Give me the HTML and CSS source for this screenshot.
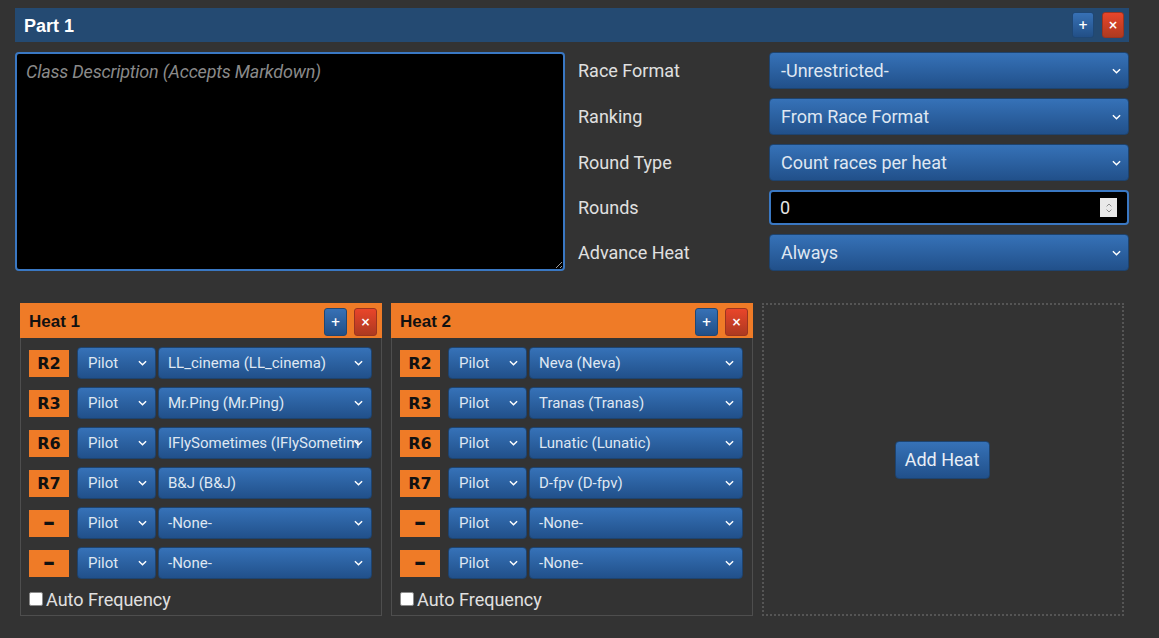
FILE: index.html
```html
<!DOCTYPE html>
<html>
<head>
<meta charset="utf-8">
<link rel="stylesheet" href="styles.css">
</head>
<body>
<div class="page">
  <section class="panel">
    <header class="panel-head">
      <h2 class="panel-title">Part 1</h2>
      <div class="actions">
        <span class="btn-sm btn-add">+</span>
        <span class="btn-sm btn-del">×</span>
      </div>
    </header>
    <div class="panel-body">
      <textarea class="desc" placeholder="Class Description (Accepts Markdown)"></textarea>
      <div class="form">
        <div class="field"><span class="label">Race Format</span><div class="select big">-Unrestricted-<svg class="chev" viewBox="0 0 10 6"><path d="M1 1l4 4 4-4"/></svg></div></div>
        <div class="field"><span class="label">Ranking</span><div class="select big">From Race Format<svg class="chev" viewBox="0 0 10 6"><path d="M1 1l4 4 4-4"/></svg></div></div>
        <div class="field"><span class="label">Round Type</span><div class="select big">Count races per heat<svg class="chev" viewBox="0 0 10 6"><path d="M1 1l4 4 4-4"/></svg></div></div>
        <div class="field field-num"><span class="label">Rounds</span><div class="numinput">0<span class="spin"><svg viewBox="0 0 10 16"><path d="M2 6l3-3 3 3M2 10l3 3 3-3"/></svg></span></div></div>
        <div class="field"><span class="label">Advance Heat</span><div class="select big">Always<svg class="chev" viewBox="0 0 10 6"><path d="M1 1l4 4 4-4"/></svg></div></div>
      </div>
    </div>

    <div class="heats">
      <div class="heat">
        <div class="heat-head">
          <h3 class="heat-title">Heat 1</h3>
          <div class="actions">
            <span class="btn-sm btn-add tall">+</span>
            <span class="btn-sm btn-del tall">×</span>
          </div>
        </div>
        <div class="slots">
          <div class="slot"><span class="badge">R2</span><div class="select sm pilot">Pilot<svg class="chev" viewBox="0 0 10 6"><path d="M1 1l4 4 4-4"/></svg></div><div class="select sm name">LL_cinema (LL_cinema)<svg class="chev" viewBox="0 0 10 6"><path d="M1 1l4 4 4-4"/></svg></div></div>
          <div class="slot"><span class="badge">R3</span><div class="select sm pilot">Pilot<svg class="chev" viewBox="0 0 10 6"><path d="M1 1l4 4 4-4"/></svg></div><div class="select sm name">Mr.Ping (Mr.Ping)<svg class="chev" viewBox="0 0 10 6"><path d="M1 1l4 4 4-4"/></svg></div></div>
          <div class="slot"><span class="badge">R6</span><div class="select sm pilot">Pilot<svg class="chev" viewBox="0 0 10 6"><path d="M1 1l4 4 4-4"/></svg></div><div class="select sm name"><span class="clip">IFlySometimes (IFlySometimes)</span><svg class="chev" viewBox="0 0 10 6"><path d="M1 1l4 4 4-4"/></svg></div></div>
          <div class="slot"><span class="badge">R7</span><div class="select sm pilot">Pilot<svg class="chev" viewBox="0 0 10 6"><path d="M1 1l4 4 4-4"/></svg></div><div class="select sm name">B&amp;J (B&amp;J)<svg class="chev" viewBox="0 0 10 6"><path d="M1 1l4 4 4-4"/></svg></div></div>
          <div class="slot"><span class="badge dash">–</span><div class="select sm pilot">Pilot<svg class="chev" viewBox="0 0 10 6"><path d="M1 1l4 4 4-4"/></svg></div><div class="select sm name">-None-<svg class="chev" viewBox="0 0 10 6"><path d="M1 1l4 4 4-4"/></svg></div></div>
          <div class="slot"><span class="badge dash">–</span><div class="select sm pilot">Pilot<svg class="chev" viewBox="0 0 10 6"><path d="M1 1l4 4 4-4"/></svg></div><div class="select sm name">-None-<svg class="chev" viewBox="0 0 10 6"><path d="M1 1l4 4 4-4"/></svg></div></div>
        </div>
        <label class="auto"><span class="check"></span>Auto Frequency</label>
      </div>

      <div class="heat">
        <div class="heat-head">
          <h3 class="heat-title">Heat 2</h3>
          <div class="actions">
            <span class="btn-sm btn-add tall">+</span>
            <span class="btn-sm btn-del tall">×</span>
          </div>
        </div>
        <div class="slots">
          <div class="slot"><span class="badge">R2</span><div class="select sm pilot">Pilot<svg class="chev" viewBox="0 0 10 6"><path d="M1 1l4 4 4-4"/></svg></div><div class="select sm name">Neva (Neva)<svg class="chev" viewBox="0 0 10 6"><path d="M1 1l4 4 4-4"/></svg></div></div>
          <div class="slot"><span class="badge">R3</span><div class="select sm pilot">Pilot<svg class="chev" viewBox="0 0 10 6"><path d="M1 1l4 4 4-4"/></svg></div><div class="select sm name">Tranas (Tranas)<svg class="chev" viewBox="0 0 10 6"><path d="M1 1l4 4 4-4"/></svg></div></div>
          <div class="slot"><span class="badge">R6</span><div class="select sm pilot">Pilot<svg class="chev" viewBox="0 0 10 6"><path d="M1 1l4 4 4-4"/></svg></div><div class="select sm name">Lunatic (Lunatic)<svg class="chev" viewBox="0 0 10 6"><path d="M1 1l4 4 4-4"/></svg></div></div>
          <div class="slot"><span class="badge">R7</span><div class="select sm pilot">Pilot<svg class="chev" viewBox="0 0 10 6"><path d="M1 1l4 4 4-4"/></svg></div><div class="select sm name">D-fpv (D-fpv)<svg class="chev" viewBox="0 0 10 6"><path d="M1 1l4 4 4-4"/></svg></div></div>
          <div class="slot"><span class="badge dash">–</span><div class="select sm pilot">Pilot<svg class="chev" viewBox="0 0 10 6"><path d="M1 1l4 4 4-4"/></svg></div><div class="select sm name">-None-<svg class="chev" viewBox="0 0 10 6"><path d="M1 1l4 4 4-4"/></svg></div></div>
          <div class="slot"><span class="badge dash">–</span><div class="select sm pilot">Pilot<svg class="chev" viewBox="0 0 10 6"><path d="M1 1l4 4 4-4"/></svg></div><div class="select sm name">-None-<svg class="chev" viewBox="0 0 10 6"><path d="M1 1l4 4 4-4"/></svg></div></div>
        </div>
        <label class="auto"><span class="check"></span>Auto Frequency</label>
      </div>

      <div class="add-heat">
        <span class="btn-big">Add Heat</span>
      </div>
    </div>
  </section>
</div>
</body>
</html>
```

FILE: styles.css
```css
* { box-sizing: border-box; }
html, body {
  margin: 0;
  background: #333333;
  height: 100%;
  overflow: hidden;
}
body {
  font-family: Roboto, "Noto Sans", sans-serif;
  font-size: 18px;
  color: #e4e4e4;
}
.page {
  padding: 8px 0 0 15px;
  width: 1129px;
}
.panel-head {
  height: 34px;
  background: #244a72;
  display: flex;
  align-items: center;
  justify-content: space-between;
  padding: 0 5px 0 9px;
}
.panel-title {
  margin: 0;
  padding-top: 2px;
  font-family: "Liberation Sans", Arial, sans-serif;
  font-weight: bold;
  font-size: 18px;
  color: #ffffff;
}
.actions {
  display: flex;
  gap: 8px;
}
.btn-sm {
  width: 22px;
  height: 26px;
  border-radius: 3px;
  display: flex;
  align-items: center;
  justify-content: center;
  color: #fff;
  font-family: "DejaVu Sans", sans-serif;
  font-weight: bold;
  font-size: 12px;
  line-height: 1;
}
.btn-sm.tall { width: 23px; height: 28px; }
.btn-add {
  background: linear-gradient(#3771b6, #224f86);
  border: 1px solid #1f4774;
}
.btn-del {
  background: linear-gradient(#e9452a, #ad3a20);
  border: 1px solid #9b3420;
}
.panel-body {
  display: flex;
  margin-top: 10px;
}
.desc {
  width: 550px;
  height: 219px;
  background: #000;
  border: 2px solid #3a78c3;
  border-radius: 4px;
  padding: 7px 9px;
  margin: 0;
  color: #ddd;
  font-family: inherit;
  font-size: 18px;
  letter-spacing: -0.2px;
  resize: both;
  outline: none;
}
.desc::placeholder {
  color: #8a8a8a;
  font-style: italic;
}
.form {
  flex: 1;
  margin-left: 13px;
  display: flex;
  flex-direction: column;
  gap: 9px;
}
.field {
  display: flex;
  align-items: center;
  height: 37px;
}
.field-num { height: 35px; }
.label {
  width: 191px;
  color: #e0e0e0;
}
.select {
  position: relative;
  display: flex;
  align-items: center;
  background: linear-gradient(#3672b8, #21508a);
  border: 1px solid #1e436e;
  border-radius: 4px;
  color: #dfe7f2;
  white-space: nowrap;
  overflow: hidden;
}
.select.big {
  flex: 1;
  height: 37px;
  padding-left: 11px;
}
.chev {
  position: absolute;
  right: 7px;
  top: 50%;
  width: 9px;
  height: 6px;
  margin-top: -3px;
  fill: none;
  stroke: #ffffff;
  stroke-width: 1.6;
}
.numinput {
  flex: 1;
  height: 35px;
  background: #000;
  border: 2px solid #3a78c3;
  border-radius: 4px;
  display: flex;
  align-items: center;
  justify-content: space-between;
  padding: 0 10px 0 9px;
  color: #e4e4e4;
}
.spin {
  width: 17px;
  height: 19px;
  background: #e9e9e9;
  display: flex;
  align-items: center;
  justify-content: center;
}
.spin svg {
  width: 8px;
  height: 14px;
  fill: none;
  stroke: #8a8a8a;
  stroke-width: 1.2;
}
.heats {
  display: flex;
  gap: 9px;
  margin-top: 32px;
  padding-left: 5px;
}
.heat {
  width: 362px;
  border: 1px solid #4e4e4e;
  border-top: 0;
  padding-bottom: 4px;
}
.heat-head {
  height: 35px;
  margin: 0 -1px;
  background: #ef7b27;
  display: flex;
  align-items: center;
  justify-content: space-between;
  padding: 2px 5px 0 9px;
}
.heat-title {
  margin: 0;
  font-family: "Liberation Sans", Arial, sans-serif;
  font-weight: bold;
  font-size: 17px;
  color: #111;
}
.heat-head .actions { gap: 7px; }
.slots {
  display: flex;
  flex-direction: column;
  gap: 8px;
  padding: 9px 9px 0 8px;
}
.slot {
  display: flex;
  align-items: center;
  height: 32px;
}
.badge {
  width: 40px;
  height: 27px;
  background: #ef7b27;
  color: #111;
  font-family: "DejaVu Sans", sans-serif;
  font-weight: bold;
  font-size: 16px;
  display: flex;
  align-items: center;
  justify-content: center;
  margin-right: 8px;
}
.badge.dash {
  font-size: 24px;
  line-height: 1;
  padding-bottom: 2px;
}
.select.sm {
  height: 32px;
  font-size: 15px;
}
.select.sm .chev { right: 8px; }
.pilot {
  width: 79px;
  padding-left: 10px;
  margin-right: 2px;
}
.name {
  flex: 1;
  padding-left: 9px;
}
.clip {
  display: block;
  width: 191px;
  overflow: hidden;
}
.auto {
  display: flex;
  align-items: center;
  height: 24px;
  margin-top: 8px;
  padding-left: 8px;
  color: #e0e0e0;
}
.check {
  width: 14px;
  height: 14px;
  background: #fff;
  border: 1px solid #8a8a8a;
  border-radius: 2px;
  margin-right: 3px;
}
.add-heat {
  width: 362px;
  border: 2px dotted #555;
  display: flex;
  align-items: center;
  justify-content: center;
}
.btn-big {
  width: 95px;
  height: 38px;
  background: linear-gradient(#3672b8, #21508a);
  border: 1px solid #1e436e;
  border-radius: 4px;
  display: flex;
  align-items: center;
  justify-content: center;
  color: #e8eef6;
  margin-left: -2px;
}
```
